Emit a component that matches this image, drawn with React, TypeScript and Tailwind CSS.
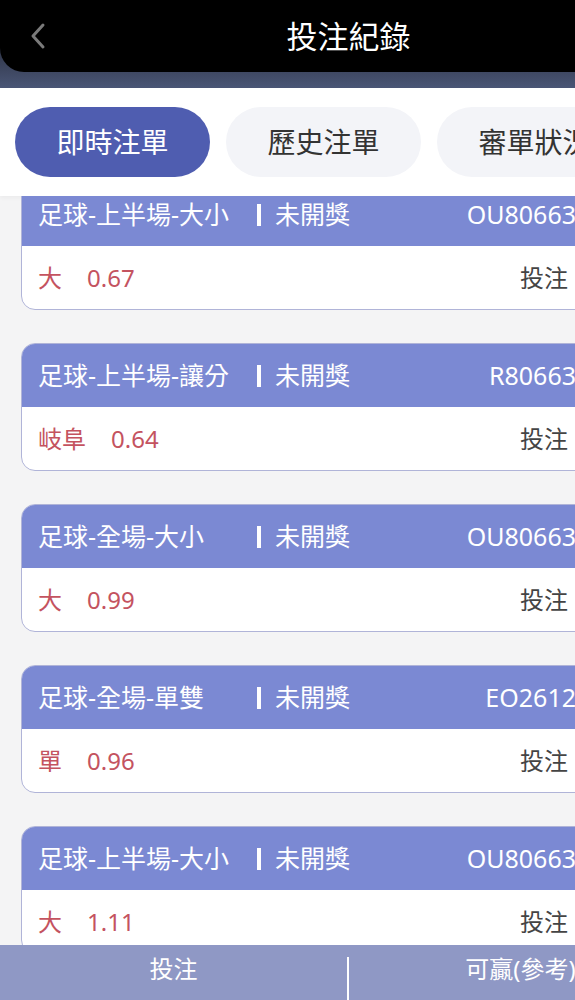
import React from "react";

type Bet = {
  game: string;
  status: string;
  code: string;
  pick: string;
  odds: string;
};

const bets: Bet[] = [
  { game: "足球-上半場-大小", status: "未開獎", code: "OU80663", pick: "大", odds: "0.67" },
  { game: "足球-上半場-讓分", status: "未開獎", code: "R80663", pick: "岐阜", odds: "0.64" },
  { game: "足球-全場-大小", status: "未開獎", code: "OU80663", pick: "大", odds: "0.99" },
  { game: "足球-全場-單雙", status: "未開獎", code: "EO2612", pick: "單", odds: "0.96" },
  { game: "足球-上半場-大小", status: "未開獎", code: "OU80663", pick: "大", odds: "1.11" },
];

const tabs = ["即時注單", "歷史注單", "審單狀況"];

function BetCard({ bet }: { bet: Bet }) {
  return (
    <div className="ml-[21px] w-[570px] shrink-0 overflow-hidden rounded-[14px] border-[1.5px] border-[#b0b4d8] bg-white">
      {/* header */}
      <div className="flex h-[63px] items-center bg-[#7b89d3] pl-[16px] pr-[14px] text-[25px] text-white">
        <span className="w-[204px] whitespace-nowrap">{bet.game}</span>
        <span className="ml-[15px] mr-[14px] h-[22px] w-[4px] bg-white" />
        <span className="whitespace-nowrap">{bet.status}</span>
        <span className="ml-auto whitespace-nowrap">{bet.code}</span>
      </div>
      {/* body */}
      <div className="flex h-[63px] items-center pl-[16px] pr-[22px] text-[24px]">
        <span className="text-[#c4535f]">{bet.pick}</span>
        <span className="ml-[25px] text-[#c4535f]">{bet.odds}</span>
        <span className="ml-auto text-[#444]">投注</span>
      </div>
    </div>
  );
}

export default function App() {
  return (
    <div
      className="relative flex h-[1000px] w-[575px] flex-col overflow-hidden bg-[#f4f4f5]"
      style={{ fontFamily: '"Noto Sans", "Noto Sans CJK TC", sans-serif' }}
    >
      {/* Top bar */}
      <div className="h-[88px] shrink-0 bg-gradient-to-b from-[#1c1e24] via-[#2c3142] to-[#4a5676]">
        <div className="relative flex h-[72px] items-center rounded-bl-[24px] bg-black">
          <svg className="absolute left-[28px] top-[22px]" width="20" height="28" viewBox="0 0 20 28" fill="none">
            <path d="M15 3 L5 14 L15 25" stroke="#7a7a7a" strokeWidth="3" strokeLinecap="round" strokeLinejoin="round" />
          </svg>
          <div className="w-full pl-[122px] text-center text-[31px] text-white">投注紀錄</div>
        </div>
      </div>

      {/* Tabs */}
      <div className="flex h-[108px] shrink-0 items-center gap-4 bg-white pl-[15px] shadow-[0_2px_4px_rgba(0,0,0,0.04)]">
        {tabs.map((t, i) => (
          <div
            key={t}
            className={
              i === 0
                ? "flex h-[70px] w-[195px] shrink-0 items-center justify-center rounded-full bg-[#4f5db0] text-[28px] text-white"
                : "flex h-[70px] w-[195px] shrink-0 items-center justify-center rounded-full bg-[#f3f4f8] text-[28px] text-[#333]"
            }
          >
            {t}
          </div>
        ))}
      </div>

      {/* Card list */}
      <div className="flex-1 overflow-hidden">
        <div className="-mt-[14px] flex flex-col gap-[33px]">
          {bets.map((b, i) => (
            <BetCard key={i} bet={b} />
          ))}
        </div>
      </div>

      {/* Bottom bar */}
      <div className="grid h-[55px] w-[694px] shrink-0 grid-cols-2 bg-[#8f98c5] text-[24px] text-white">
        <div className="flex items-start justify-center pt-[6px]">投注</div>
        <div className="relative flex items-start justify-center pt-[6px]">
          <span className="absolute left-0 top-[12px] h-[43px] w-[2px] bg-white" />
          可贏(參考)
        </div>
      </div>
    </div>
  );
}
